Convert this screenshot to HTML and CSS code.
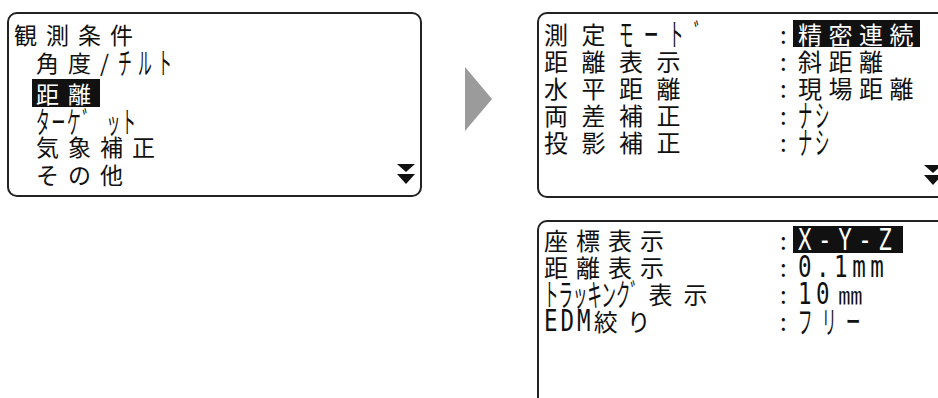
FILE: index.html
```html
<!DOCTYPE html>
<html lang="ja">
<head>
<meta charset="utf-8">
<link rel="stylesheet" href="styles.css">
</head>
<body>
<div class="page">
  <div class="panel menu">
    <div class="row">観測条件</div>
    <div class="row item">角度<span class="slash">/</span><span class="hw h-chiru">チルト</span></div>
    <div class="row item shift-down"><span class="hl">距離</span></div>
    <div class="row item"><span class="hw h-target">ターケ゛&#8194;ット</span></div>
    <div class="row item shift-up">気象補正</div>
    <div class="row item last"><span>その他</span><svg class="more" viewBox="0 0 18 20"><polygon points="0,0 18,0 9,8"/><polygon points="0,10 18,10 9,20"/></svg></div>
  </div>
  <svg class="next" viewBox="0 0 27 64"><polygon points="0,0 27,32 0,64"/></svg>
  <div class="col">
    <div class="panel settings">
      <div class="grid">
        <span class="lbl wide">測定<span class="hw h-mode">モート゛</span></span><span class="colon">:</span><span class="val"><span class="hl">精密連続</span></span>
        <span class="lbl wide">距離表示</span><span class="colon">:</span><span class="val">斜距離</span>
        <span class="lbl wide">水平距離</span><span class="colon">:</span><span class="val">現場距離</span>
        <span class="lbl wide">両差補正</span><span class="colon">:</span><span class="val"><span class="hw h-nashi">ナシ</span></span>
        <span class="lbl wide">投影補正</span><span class="colon">:</span><span class="val"><span class="hw h-nashi">ナシ</span></span>
      </div>
      <div class="foot"><svg class="more" viewBox="0 0 18 20"><polygon points="0,0 18,0 9,8"/><polygon points="0,10 18,10 9,20"/></svg></div>
    </div>
    <div class="panel settings low">
      <div class="grid">
        <span class="lbl tight">座標表示</span><span class="colon">:</span><span class="val"><span class="hl xyz"><span class="lat l-xyz">X-Y-Z</span></span></span>
        <span class="lbl tight">距離表示</span><span class="colon">:</span><span class="val"><span class="lat l-dist">0.1mm</span></span>
        <span class="lbl"><span class="hw h-track">トラッキンク゛</span><span class="k2">表示</span></span><span class="colon">:</span><span class="val"><span class="lat l-ten">10</span><span class="mm">㎜</span></span>
        <span class="lbl"><span class="lat l-edm">EDM</span><span class="k3">絞り</span></span><span class="colon">:</span><span class="val"><span class="hw h-free">フリー</span></span>
      </div>
    </div>
  </div>
</div>
</body>
</html>
```

FILE: styles.css
```css
* {
  box-sizing: border-box;
  margin: 0;
  padding: 0;
}

html, body {
  width: 938px;
  height: 398px;
  overflow: hidden;
  background: #fff;
}

body {
  font-family: "Noto Sans CJK JP", "Noto Sans", sans-serif;
  color: #111;
}

.page {
  display: flex;
  align-items: flex-start;
  padding: 12px 0 0 7px;
  width: 980px;
}

.panel {
  border: 2px solid #222;
  border-radius: 10px;
  flex-shrink: 0;
  white-space: nowrap;
}

.menu {
  width: 415px;
  height: 185px;
  padding: 6px 5px 0 5px;
  font-size: 23px;
  line-height: 28px;
  letter-spacing: 9px;
}

.item {
  padding-left: 22px;
}

.shift-down {
  margin-top: 3px;
}

.shift-up {
  margin-top: -3px;
}

.last {
  display: flex;
  justify-content: space-between;
  align-items: center;
}

.hl {
  display: inline-block;
  background: #111;
  color: #fff;
}

.menu .hl {
  margin-left: -4px;
  padding-left: 4px;
}

/* narrow katakana of the LCD font: full-width glyphs enlarged and squeezed */
.hw {
  display: inline-block;
  font-size: 1.3em;
  line-height: 20px;
  vertical-align: -2px;
  transform: scaleX(0.46);
  transform-origin: 0 50%;
}

.h-chiru {
  letter-spacing: 13.6px;
  margin-right: -70.5px;
}

.h-target {
  letter-spacing: 3.8px;
  margin-right: -119.4px;
}

.h-mode {
  letter-spacing: 23.1px;
  margin-right: -117.4px;
}

.h-nashi {
  letter-spacing: 5.8px;
  margin-right: -40px;
}

.h-track {
  letter-spacing: 0.3px;
  margin-right: -119.1px;
}

.h-free {
  letter-spacing: 21px;
  margin-right: -84.5px;
}

.more {
  display: block;
  width: 18px;
  height: 20px;
  fill: #111;
}

.next {
  flex-shrink: 0;
  width: 27px;
  height: 64px;
  margin: 55px 0 0 43px;
  fill: #9b9b9b;
}

.col {
  display: flex;
  flex-direction: column;
  gap: 22px;
  margin-left: 45px;
  flex-shrink: 0;
}

.settings {
  width: 412px;
  height: 186px;
  padding: 6px 5px 0 5px;
  display: flex;
  flex-direction: column;
}

.settings.low {
  height: 200px;
  padding-top: 4px;
}

.grid {
  display: grid;
  grid-template-columns: 236px 13px auto;
  justify-content: start;
  font-size: 24px;
  line-height: 27px;
}

.foot {
  margin-top: auto;
  padding-bottom: 11px;
  display: flex;
  justify-content: flex-end;
}

.wide {
  letter-spacing: 13.5px;
}

.tight {
  letter-spacing: 8px;
}

.k2 {
  margin-left: 4px;
  letter-spacing: 11px;
}

.k3 {
  letter-spacing: 9px;
}

.colon {
  font-size: 24px;
}

.val {
  padding-left: 5px;
  letter-spacing: 6.5px;
}

.val .hl {
  margin-left: -5px;
  padding-left: 5px;
}

/* narrow latin of the LCD font: monospace squeezed */
.lat {
  display: inline-block;
  font-family: "DejaVu Sans Mono", "Liberation Mono", monospace;
  font-size: 30px;
  line-height: 20px;
  transform: scaleX(0.75);
  transform-origin: 0 50%;
}

.l-xyz {
  letter-spacing: 8.7px;
  margin-right: -33.4px;
}

.l-dist {
  letter-spacing: 6px;
  margin-right: -30px;
}

.l-ten {
  letter-spacing: 6px;
  margin-right: -12px;
}

.l-edm {
  letter-spacing: 4px;
  margin-right: -16.5px;
}

.xyz {
  padding-right: 5px;
}

.mm {
  margin-left: 4px;
  letter-spacing: 0;
}
```
